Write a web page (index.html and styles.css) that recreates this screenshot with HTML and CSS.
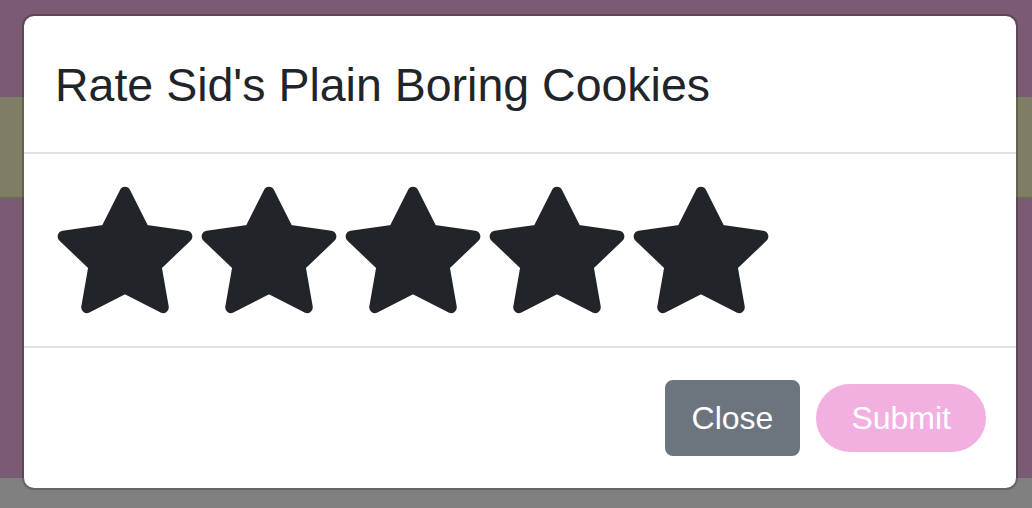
FILE: index.html
```html
<!DOCTYPE html>
<html lang="en">
<head>
<meta charset="utf-8">
<title>Rate cookies</title>
<link rel="stylesheet" href="styles.css">
</head>
<body>
<div class="page">
  <div class="page-top"></div>
  <div class="page-band"></div>
  <div class="page-main"></div>
  <div class="page-foot"></div>
</div>
<div class="modal">
  <div class="modal-header">
    <h5 class="modal-title">Rate Sid's Plain Boring Cookies</h5>
  </div>
  <div class="modal-body">
    <div class="stars">
      <svg class="star" viewBox="0 0.5 16 15" width="132" height="124"><path d="M3.612 15.443c-.386.198-.824-.149-.746-.592l.83-4.73L.173 6.765c-.329-.314-.158-.888.283-.95l4.898-.696L7.538.792c.197-.39.73-.39.927 0l2.184 4.327 4.898.696c.441.062.612.636.282.95l-3.522 3.356.83 4.73c.078.443-.36.79-.746.592L8 13.187l-4.389 2.256z"/></svg>
      <svg class="star" viewBox="0 0.5 16 15" width="132" height="124"><path d="M3.612 15.443c-.386.198-.824-.149-.746-.592l.83-4.73L.173 6.765c-.329-.314-.158-.888.283-.95l4.898-.696L7.538.792c.197-.39.73-.39.927 0l2.184 4.327 4.898.696c.441.062.612.636.282.95l-3.522 3.356.83 4.73c.078.443-.36.79-.746.592L8 13.187l-4.389 2.256z"/></svg>
      <svg class="star" viewBox="0 0.5 16 15" width="132" height="124"><path d="M3.612 15.443c-.386.198-.824-.149-.746-.592l.83-4.73L.173 6.765c-.329-.314-.158-.888.283-.95l4.898-.696L7.538.792c.197-.39.73-.39.927 0l2.184 4.327 4.898.696c.441.062.612.636.282.95l-3.522 3.356.83 4.73c.078.443-.36.79-.746.592L8 13.187l-4.389 2.256z"/></svg>
      <svg class="star" viewBox="0 0.5 16 15" width="132" height="124"><path d="M3.612 15.443c-.386.198-.824-.149-.746-.592l.83-4.73L.173 6.765c-.329-.314-.158-.888.283-.95l4.898-.696L7.538.792c.197-.39.73-.39.927 0l2.184 4.327 4.898.696c.441.062.612.636.282.95l-3.522 3.356.83 4.73c.078.443-.36.79-.746.592L8 13.187l-4.389 2.256z"/></svg>
      <svg class="star" viewBox="0 0.5 16 15" width="132" height="124"><path d="M3.612 15.443c-.386.198-.824-.149-.746-.592l.83-4.73L.173 6.765c-.329-.314-.158-.888.283-.95l4.898-.696L7.538.792c.197-.39.73-.39.927 0l2.184 4.327 4.898.696c.441.062.612.636.282.95l-3.522 3.356.83 4.73c.078.443-.36.79-.746.592L8 13.187l-4.389 2.256z"/></svg>
    </div>
  </div>
  <div class="modal-footer">
    <button class="btn btn-close" type="button">Close</button>
    <button class="btn btn-submit" type="button">Submit</button>
  </div>
</div>
</body>
</html>
```

FILE: styles.css
```css
html, body {
  margin: 0;
  padding: 0;
  width: 1032px;
  height: 508px;
  overflow: hidden;
  font-family: "Liberation Sans", Arial, sans-serif;
}

.page {
  display: flex;
  flex-direction: column;
  height: 508px;
}

.page-top {
  height: 97px;
  background: #7b5a73;
}

.page-band {
  height: 100px;
  background: #7f7e65;
  border-bottom: 2px solid #6c6a5e;
}

.page-main {
  height: 279px;
  background: #7b5a73;
}

.page-foot {
  flex: 1;
  background: #808080;
}

.modal {
  position: absolute;
  left: 22px;
  top: 14px;
  width: 996px;
  box-sizing: border-box;
  background: #fff;
  border: 2px solid rgba(0, 0, 0, 0.22);
  border-radius: 12px;
  background-clip: padding-box;
  display: flex;
  flex-direction: column;
  color: #212529;
}

.modal-header {
  padding: 33px 31px 31px;
  border-bottom: 2px solid #dee2e6;
}

.modal-title {
  margin: 0;
  font-size: 46.5px;
  font-weight: 400;
  line-height: 72px;
  color: #212529;
}

.modal-body {
  padding: 34px 32px 30px 35px;
}

.stars {
  display: flex;
  gap: 12px;
  height: 128px;
}

.star {
  display: block;
  fill: #212529;
  stroke: #212529;
  stroke-width: 0.32;
  stroke-linejoin: round;
  overflow: visible;
  flex: none;
}

.modal-footer {
  display: flex;
  justify-content: flex-end;
  align-items: center;
  padding: 24px 22px 24px 24px;
  border-top: 2px solid #dee2e6;
}

.btn {
  margin: 8px;
  font-family: "Liberation Sans", Arial, sans-serif;
  font-size: 32px;
  line-height: 48px;
  color: #fff;
  border: 2px solid transparent;
  cursor: pointer;
}

.btn-close {
  height: 76px;
  padding: 12px 25px;
  background: #6c757d;
  border-color: #6c757d;
  border-radius: 8px;
}

.btn-submit {
  height: 68px;
  padding: 8px 33px;
  background: #f2b0e0;
  border-color: #f2b0e0;
  border-radius: 34px;
}
```
